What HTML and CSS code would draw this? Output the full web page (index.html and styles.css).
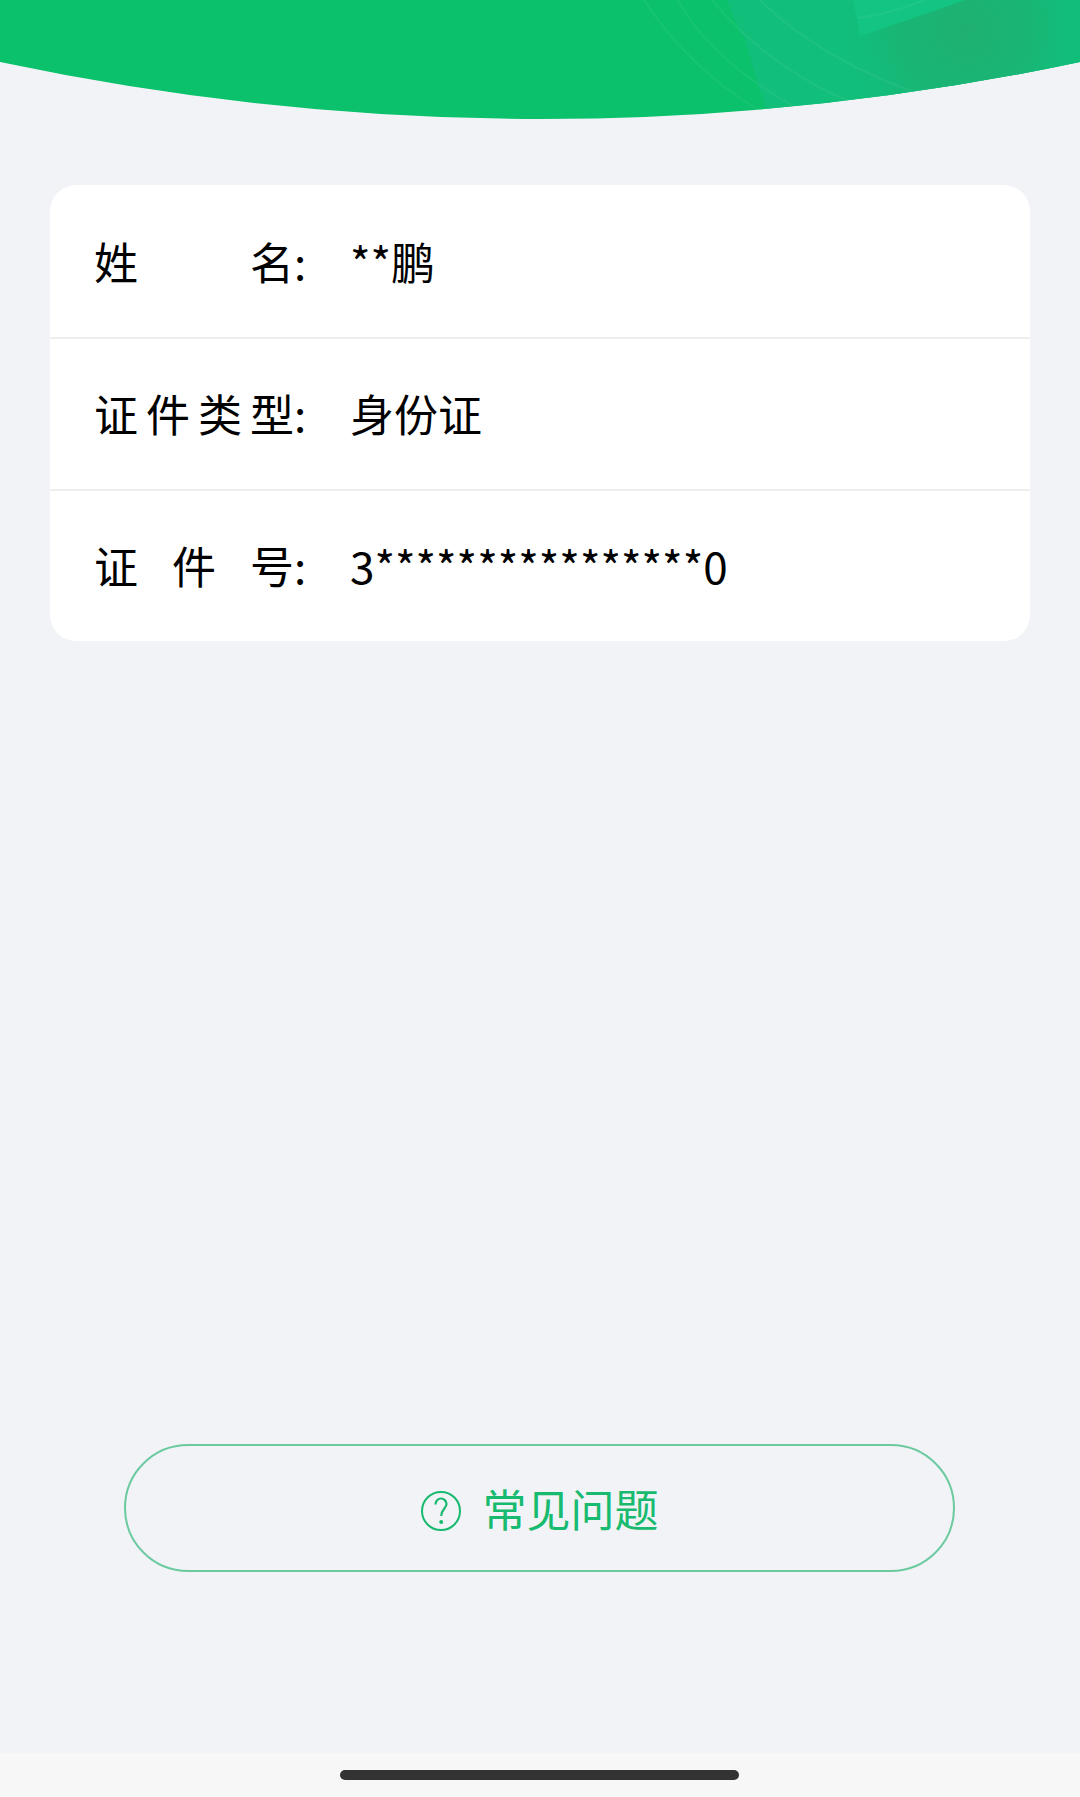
FILE: index.html
```html
<!DOCTYPE html>
<html>
<head>
    <title>常见问题</title>
    <meta name="viewport" content="width=device-width, initial-scale=1">
    <link rel="stylesheet" href="styles.css">
</head>
<body>
    <header class="banner">
        <svg class="banner-art" viewBox="0 0 1080 119" width="1080" height="119">
            <defs>
                <clipPath id="curve">
                    <path d="M0 0H1080V62Q540 176 0 62Z"/>
                </clipPath>
                <radialGradient id="shade" gradientUnits="userSpaceOnUse" cx="965" cy="30" r="125">
                    <stop offset="0" stop-color="#1fb071"/>
                    <stop offset="0.55" stop-color="#1bb374" stop-opacity="0.75"/>
                    <stop offset="1" stop-color="#14bb7a" stop-opacity="0"/>
                </radialGradient>
            </defs>
            <g clip-path="url(#curve)">
                <rect width="1080" height="119" fill="#0bc16b"/>
                <path d="M727 0Q738 30 745 38Q752 70 770 119H1080V0Z" fill="#11be7a"/>
                <rect x="830" width="250" height="119" fill="url(#shade)"/>
                <path d="M853 0L860 36Q915 18 965 0Z" fill="#14c482"/>
                <g fill="none" stroke="#ffffff" stroke-opacity="0.05" stroke-width="2">
                    <path d="M644 0Q690 70 762 112"/>
                    <path d="M678 0Q710 60 800 110"/>
                    <path d="M712 0Q770 70 860 106"/>
                    <path d="M760 0Q820 60 930 98"/>
                    <path d="M858 18Q890 14 925 0"/>
                </g>
            </g>
        </svg>
    </header>

    <section class="card">
        <div class="row">
            <span class="label">姓名</span><span class="colon">:</span>
            <span class="value">**鹏</span>
        </div>
        <div class="row">
            <span class="label">证件类型</span><span class="colon">:</span>
            <span class="value">身份证</span>
        </div>
        <div class="row">
            <span class="label">证件号</span><span class="colon">:</span>
            <span class="value">3****************0</span>
        </div>
    </section>

    <button class="faq-button" type="button">
        <svg class="faq-icon" viewBox="0 0 40 40" width="40" height="40">
            <circle cx="20" cy="20" r="19" fill="none" stroke="currentColor" stroke-width="2"/>
            <path d="M14.5 13.5C14.5 10 17 7.5 20 7.5C23 7.5 25.5 10 25.5 13C25.5 17 20.2 18.5 20.2 25" fill="none" stroke="currentColor" stroke-width="2.2"/>
            <circle cx="20.2" cy="31" r="2" fill="currentColor"/>
        </svg>
        <span>常见问题</span>
    </button>

    <footer class="home-bar">
        <div class="home-indicator"></div>
    </footer>
</body>
</html>
```

FILE: styles.css
```css
* {
    box-sizing: border-box;
}

body {
    display: flex;
    flex-direction: column;
    height: 1797px;
    margin: 0;
    background-color: #f1f3f7;
    color: #000;
    font-family: "Noto Sans CJK SC", "Noto Sans", sans-serif;
    font-size: 44px;
    overflow: hidden;
}

.banner {
    height: 119px;
    flex: none;
}

.banner-art {
    display: block;
}

.card {
    margin: 66px 50px 0;
    padding-top: 2px;
    background-color: #fff;
    border-radius: 26px;
}

.row {
    display: flex;
    align-items: center;
    height: 152px;
    padding: 0 0 3px 44px;
    border-bottom: 2px solid #eeeeef;
}

.row:last-child {
    height: 150px;
    border-bottom: none;
}

.label {
    width: 200px;
    text-align: justify;
    text-align-last: justify;
}

.colon {
    width: 56px;
}

.faq-button {
    display: flex;
    align-items: center;
    justify-content: center;
    gap: 22px;
    width: 831px;
    height: 128px;
    margin: auto 0 181px 124px;
    padding: 0;
    background: none;
    border: 2px solid #6cca9f;
    border-radius: 64px;
    color: #17ba6e;
    font-family: inherit;
    font-size: 44px;
}

.faq-icon {
    flex: none;
    margin-top: 6px;
}

.home-bar {
    flex: none;
    height: 44px;
    padding-top: 17px;
    background-color: #f7f7f7;
}

.home-indicator {
    width: 399px;
    height: 10px;
    margin-left: 340px;
    background-color: #333;
    border-radius: 5px;
}
```
